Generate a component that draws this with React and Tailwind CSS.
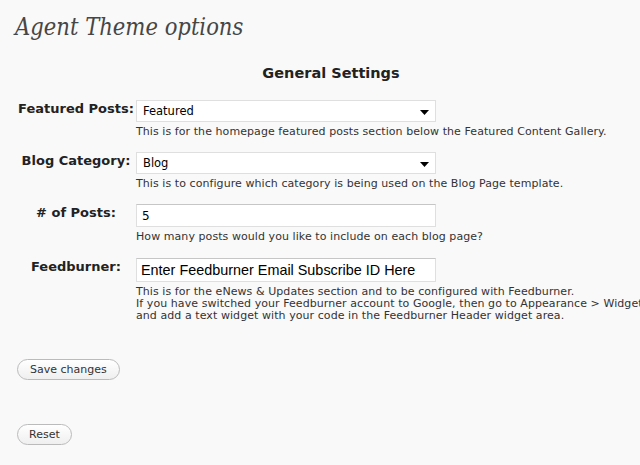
export default function App() {
  const desc = "text-[11px] leading-[12px] text-[#333] mt-[4px] tracking-[0.07px]";
  const sans = { fontFamily: '"DejaVu Sans", Verdana, sans-serif' };
  const label = "w-[120px] shrink-0 text-center text-[13px] font-bold text-[#222] leading-[16px]";
  const Arrow = () => (
    <svg width="9" height="5" viewBox="0 0 9 5" className="absolute right-[6px] top-[9px]">
      <polygon points="0,0 9,0 4.5,5" fill="#000" />
    </svg>
  );
  return (
    <div className="w-[640px] h-[465px] bg-[#f9f9f9] overflow-hidden relative" style={sans}>
      <div className="pl-[15px] pt-[13px] text-[23.5px] italic text-[#464646] leading-[28px] font-['DejaVu_Serif_Condensed','DejaVu_Serif',Georgia,serif] [font-stretch:condensed]">
        Agent Theme options
      </div>
      <div className="ml-[16px] w-[630px] text-center mt-[23px] text-[14.5px] font-bold text-[#222] leading-[18px]">
        General Settings
      </div>

      <div className="pl-[16px] mt-[18px]">
        {/* Row 1 */}
        <div className="flex">
          <div className={label + " pt-[1px]"}>Featured Posts:</div>
          <div>
            <div className="relative w-[300px] h-[22px] bg-white border border-[#dfdfdf] text-[11.5px] text-black pl-[6px] leading-[20px]">
              Featured
              <Arrow />
            </div>
            <div className={desc}>This is for the homepage featured posts section below the Featured Content Gallery.</div>
          </div>
        </div>

        {/* Row 2 */}
        <div className="flex mt-[14px]">
          <div className={label + " pt-[1px]"}>Blog Category:</div>
          <div>
            <div className="relative w-[300px] h-[22px] bg-white border border-[#dfdfdf] text-[11.5px] text-black pl-[6px] leading-[20px]">
              Blog
              <Arrow />
            </div>
            <div className={desc}>This is to configure which category is being used on the Blog Page template.</div>
          </div>
        </div>

        {/* Row 3 */}
        <div className="flex mt-[14px]">
          <div className={label + " pt-[1px]"}># of Posts:</div>
          <div>
            <div className="w-[300px] h-[23px] bg-white border border-[#dfdfdf] border-t-[#c6c6c6] text-[12px] text-black pl-[5px] leading-[22px]">
              5
            </div>
            <div className={desc}>How many posts would you like to include on each blog page?</div>
          </div>
        </div>

        {/* Row 4 */}
        <div className="flex mt-[15px]">
          <div className={label + " pt-[1px]"}>Feedburner:</div>
          <div>
            <div className="w-[300px] h-[24px] bg-white border border-[#dfdfdf] border-t-[#c6c6c6] text-[14.4px] text-black pl-[4px] leading-[22px] font-['Liberation_Sans',Arial,sans-serif]">
              Enter Feedburner Email Subscribe ID Here
            </div>
            <div className={desc + " whitespace-nowrap"}>
              This is for the eNews &amp; Updates section and to be configured with Feedburner.<br />
              If you have switched your Feedburner account to Google, then go to Appearance &gt; Widgets<br />
              and add a text widget with your code in the Feedburner Header widget area.
            </div>
          </div>
        </div>
      </div>

      <div className="pl-[17px] mt-[34px]">
        <button className="h-[21px] px-[12px] rounded-full border border-[#bbb] bg-gradient-to-b from-white to-[#efefef] text-[11px] text-[#333] leading-[19px]">
          Save changes
        </button>
      </div>
      <div className="pl-[17px] mt-[41px]">
        <button className="h-[21px] px-[11px] rounded-full border border-[#bbb] bg-gradient-to-b from-white to-[#efefef] text-[11px] text-[#333] leading-[19px]">
          Reset
        </button>
      </div>
    </div>
  );
}
